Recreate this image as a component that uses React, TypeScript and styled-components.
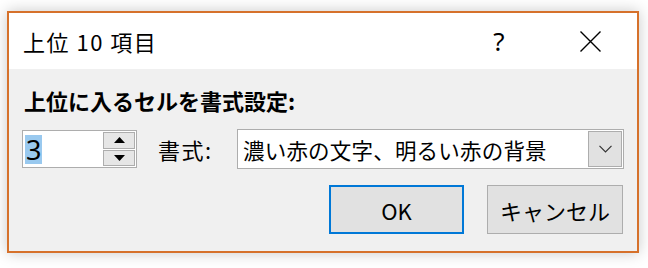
import React from "react";
import styled, { createGlobalStyle } from "styled-components";

const GlobalStyle = createGlobalStyle`
  html, body {
    margin: 0;
    padding: 0;
    background: #ffffff;
  }
  body {
    font-family: "Noto Sans CJK JP", "Noto Sans", sans-serif;
    color: #000000;
  }
`;

const Page = styled.div`
  width: 648px;
  height: 268px;
  padding: 11px 0 0 7px;
  box-sizing: border-box;
`;

const Window = styled.div`
  width: 632px;
  height: 242px;
  box-sizing: border-box;
  border: 2px solid #d6712b;
  background: #f0f0f0;
  box-shadow: 0 0 14px rgba(0, 0, 0, 0.22);
  display: flex;
  flex-direction: column;
`;

const TitleBar = styled.div`
  height: 56px;
  flex: none;
  background: #ffffff;
  display: flex;
  align-items: center;
  padding-left: 14px;
`;

const Title = styled.div`
  flex: 1;
  font-size: 22px;
  letter-spacing: 1.5px;
  line-height: 1;
`;

const Help = styled.div`
  width: 40px;
  font-family: "Noto Sans", sans-serif;
  font-size: 26px;
  text-align: center;
  line-height: 1;
  margin-right: 59px;
`;

const Close = styled.div`
  width: 24px;
  height: 24px;
  margin-right: 35px;
  display: flex;
  align-items: center;
  justify-content: center;
`;

const Body = styled.div`
  flex: 1;
  padding: 16px 13px 0 13px;
  display: flex;
  flex-direction: column;
`;

const Heading = styled.div`
  height: 30px;
  display: flex;
  align-items: center;
  padding-left: 2px;
  font-size: 22px;
  font-weight: 700;
`;

const FieldRow = styled.div`
  margin-top: 14px;
  height: 40px;
  display: flex;
  align-items: center;
`;

const Spin = styled.div`
  width: 115px;
  height: 38px;
  box-sizing: border-box;
  border: 1px solid #adadad;
  background: #ffffff;
  display: flex;
  align-items: stretch;
`;

const SpinValue = styled.div`
  flex: 1;
  display: flex;
  align-items: center;
  padding-left: 2px;
`;

const Selected = styled.span`
  background: #99c9ef;
  font-family: "Noto Sans", sans-serif;
  font-size: 27px;
  line-height: 29px;
  height: 29px;
  padding: 0 1px;
`;

const SpinButtons = styled.div`
  width: 32px;
  padding: 1px 1px 1px 0;
  display: flex;
  flex-direction: column;
  gap: 1px;
`;

const SpinButton = styled.div`
  flex: 1;
  box-sizing: border-box;
  border: 1px solid #adadad;
  background: #e6e6e6;
  display: flex;
  align-items: center;
  justify-content: center;
`;

const Label = styled.div`
  margin-left: 21px;
  width: 79px;
  font-size: 22px;
  letter-spacing: 1.5px;
`;

const Combo = styled.div`
  width: 387px;
  height: 40px;
  box-sizing: border-box;
  border: 1px solid #adadad;
  background: #ffffff;
  display: flex;
  align-items: center;
  padding: 1px;
`;

const ComboText = styled.div`
  flex: 1;
  padding-left: 4px;
  font-size: 21.5px;
  letter-spacing: 0.2px;
  white-space: nowrap;
`;

const ComboButton = styled.div`
  width: 34px;
  height: 36px;
  box-sizing: border-box;
  border: 1px solid #adadad;
  background: #e1e1e1;
  display: flex;
  align-items: center;
  justify-content: center;
`;

const ButtonRow = styled.div`
  margin-top: 16px;
  display: flex;
  justify-content: flex-end;
  gap: 23px;
  padding-right: 1px;
`;

const Button = styled.div<{ $default?: boolean }>`
  width: ${(p) => (p.$default ? "135px" : "136px")};
  height: 49px;
  box-sizing: border-box;
  border: ${(p) => (p.$default ? "2px solid #0078d7" : "1px solid #adadad")};
  background: #e1e1e1;
  display: flex;
  align-items: center;
  justify-content: center;
  font-size: 22px;
`;

const Triangle = ({ up }: { up?: boolean }) => (
  <svg width="11" height="6" viewBox="0 0 11 6">
    <path d={up ? "M0 6 L5.5 0 L11 6 Z" : "M0 0 L5.5 6 L11 0 Z"} fill="#000" />
  </svg>
);

export default function App() {
  return (
    <>
      <GlobalStyle />
      <Page>
        <Window>
          <TitleBar>
            <Title>上位 10 項目</Title>
            <Help>?</Help>
            <Close>
              <svg width="21" height="21" viewBox="0 0 21 21">
                <path d="M0.5 0.5 L20.5 20.5 M20.5 0.5 L0.5 20.5" stroke="#000" strokeWidth="1.4" />
              </svg>
            </Close>
          </TitleBar>
          <Body>
            <Heading>上位に入るセルを書式設定:</Heading>
            <FieldRow>
              <Spin>
                <SpinValue>
                  <Selected>3</Selected>
                </SpinValue>
                <SpinButtons>
                  <SpinButton>
                    <Triangle up />
                  </SpinButton>
                  <SpinButton>
                    <Triangle />
                  </SpinButton>
                </SpinButtons>
              </Spin>
              <Label>書式:</Label>
              <Combo>
                <ComboText>濃い赤の文字、明るい赤の背景</ComboText>
                <ComboButton>
                  <svg width="13" height="8" viewBox="0 0 13 8">
                    <path d="M0.5 0.8 L6.5 6.8 L12.5 0.8" stroke="#333" strokeWidth="1.2" fill="none" />
                  </svg>
                </ComboButton>
              </Combo>
            </FieldRow>
            <ButtonRow>
              <Button $default>OK</Button>
              <Button>キャンセル</Button>
            </ButtonRow>
          </Body>
        </Window>
      </Page>
    </>
  );
}
